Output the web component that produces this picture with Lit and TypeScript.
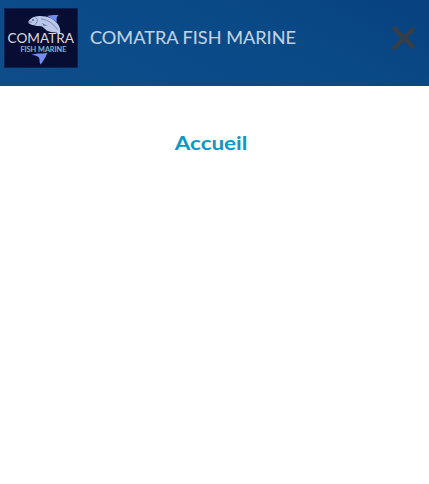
import { LitElement, html, css } from "lit";
import { customElement } from "lit/decorators.js";

@customElement("brand-logo")
class BrandLogo extends LitElement {
  static styles = css`
    :host { display: block; width: 74px; height: 60px; flex: none; }
    svg { display: block; }
    .name { font: 400 13.2px "Lato", sans-serif; fill: #dcd9dc; }
    .tag { font: 400 6.7px "Lato", sans-serif; fill: #8cc2d8; stroke: #8cc2d8; stroke-width: .15; }
  `;
  render() {
    return html`<svg width="74" height="60" viewBox="0 0 74 60" role="img" aria-label="Comatra Fish Marine">
      <rect width="74" height="60" fill="#0d2154" />
      <rect x="1" y="1" width="72" height="58" fill="#080e33" />
      <path d="M43 8 C47 6.8 51 7 54.5 7 C52.5 9 52 11 53 14 L48 11Z" fill="#6f8df0" />
      <path d="M24.3 13.4 C26.5 10 30 8.2 35 8 C43 7.7 51 11 54.5 17 C56.5 20.5 56.5 23 56 26 C53.5 24.8 50.5 24.2 47 24 L43 22.7 L38.5 18.7 C35 17.8 29 18.2 24.7 15.3Z" fill="#bac6ea" />
      <path d="M31.5 9.5 C34.5 11 33.6 14.7 30.5 17 M25 14 L28 14.2 M37 11 C43 11.5 49 15 53.5 21.5" fill="none" stroke="#5d6c9e" stroke-width=".7" />
      <path d="M38 15 L43.5 18 L39.5 17.5Z" fill="#4f6399" />
      <circle cx="29" cy="12" r=".8" fill="#182651" />
      <text class="name" x="3.5" y="34.7" textLength="66.5" lengthAdjust="spacingAndGlyphs">COMATRA</text>
      <text class="tag" x="16.4" y="43.5" textLength="46" lengthAdjust="spacingAndGlyphs">FISH MARINE</text>
      <path d="M43.5 44.4 C41.8 48.5 40.5 51.8 36.4 56.5 C34.8 53.5 36.2 51.3 34.8 49.3 C32.5 47.6 30 47.3 27.2 46.8 C32 45.4 35.3 45.3 38.2 45.6 C40.3 45.5 42 45 43.5 44.4Z" fill="#728fee" />
    </svg>`;
  }
}

@customElement("app-root")
class AppRoot extends LitElement {
  static styles = css`
    :host { display: block; height: 484px; background: #fff; overflow: hidden; font-family: "Lato", sans-serif; }
    header {
      box-sizing: border-box; height: 86px; padding: 8px 13px 0 4px;
      display: flex; align-items: flex-start;
      background: linear-gradient(25deg, #0e4d89 0%, #0b4b89 36%, #094986 64%, #08417f 100%);
    }
    .title { display: block; margin: 16px 0 0 12px; }
    .title text { font: 400 16.8px "Lato", sans-serif; fill: #c2d3e3; stroke: #c2d3e3; stroke-width: .1; }
    .close { margin: 17px 0 0 auto; padding: 0; border: 0; background: none; display: block; }
    .close svg { display: block; }
    .close path { stroke: #373e45; stroke-width: 4.3; fill: none; }
    nav { display: flex; justify-content: center; padding: 44px 7px 0 0; }
    .item { display: block; }
    .item text { font: 700 19.3px "Lato", sans-serif; fill: #0c98c7; }
  `;
  render() {
    return html`
      <header>
        <brand-logo></brand-logo>
        <svg class="title" width="208" height="28">
          <text x="0" y="20.4" textLength="206" lengthAdjust="spacingAndGlyphs">COMATRA FISH MARINE</text>
        </svg>
        <button class="close" aria-label="Fermer">
          <svg width="25" height="27" viewBox="0 0 25 27"><path d="M2 2.2 L22.8 22.6 M22.8 3.5 L2 24.2" /></svg>
        </button>
      </header>
      <nav>
        <svg class="item" width="74" height="28">
          <text x="0.8" y="20.3" textLength="72.5" lengthAdjust="spacingAndGlyphs">Accueil</text>
        </svg>
      </nav>`;
  }
}
